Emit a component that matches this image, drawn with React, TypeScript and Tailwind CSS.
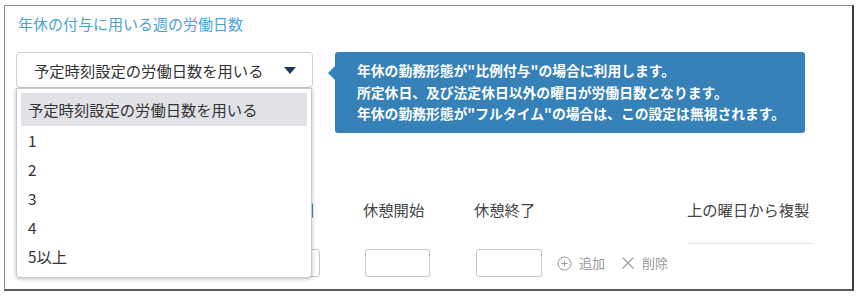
import React from "react";

const items = ["予定時刻設定の労働日数を用いる", "1", "2", "3", "4", "5以上"];

export default function App() {
  return (
    <div className="w-[860px] h-[296px] bg-white pt-[5px] pl-[4px] font-['Noto_Sans_CJK_JP','Noto_Sans',sans-serif]">
      <div className="relative w-[850px] h-[286px] border border-[#8c8c8c] border-r-2 border-r-[#3a3a3a] border-b-2 border-b-[#5a5a5a] bg-white overflow-hidden">
        {/* title */}
        <div className="pt-[8px] pl-[13px] text-[15px] leading-[20px] text-[#4ba3d9]">年休の付与に用いる週の労働日数</div>

        {/* select + help */}
        <div className="flex items-start mt-[18px] pl-[11px]">
          <div className="relative z-10 w-[297px]">
            <div className="h-[36px] flex items-center justify-between border border-[#c9ced8] rounded-[4px] pl-[17px] pr-[16px] text-[15.3px] text-[#333]">
              <span>予定時刻設定の労働日数を用いる</span>
              <span className="w-0 h-0 border-x-[6px] border-x-transparent border-t-[7px] border-t-[#1f3a5a]" />
            </div>
            {/* dropdown */}
            <div className="absolute left-0 top-[36px] w-[296px] bg-white border border-[#c8c8c8] rounded-b-[4px] shadow-[0_1px_4px_rgba(0,0,0,0.25)] px-[4px] pt-[4px] pb-[6px]">
              {items.map((it, i) => (
                <div
                  key={it}
                  className={
                    i === 0
                      ? "h-[33px] flex items-center pl-[7px] text-[15.3px] text-[#333] bg-[#e1e1e8]"
                      : "h-[29px] flex items-center pl-[7px] text-[15.3px] text-[#333]"
                  }
                >
                  {it}
                </div>
              ))}
            </div>
          </div>

          <div className="relative ml-[22px] w-[470px] h-[81px] bg-[#3681b8] rounded-[3px] pl-[22px] pt-[8px] text-[13.8px] leading-[21.5px] font-bold text-white">
            <span className="absolute left-[-7px] top-[14px] w-0 h-0 border-y-[7px] border-y-transparent border-r-[7px] border-r-[#3681b8]" />
            <p>年休の勤務形態が"比例付与"の場合に利用します。</p>
            <p>所定休日、及び法定休日以外の曜日が労働日数となります。</p>
            <p>年休の勤務形態が"フルタイム"の場合は、この設定は無視されます。</p>
          </div>
        </div>

        {/* table behind */}
        <div className="flex items-start mt-[66px] text-[15.3px] leading-[20px] text-[#444]">
          <div className="w-[356px] text-right pr-[47px] text-[#2f5f8f]">終業時刻</div>
          <div className="w-[111px] pl-[2px]">休憩開始</div>
          <div className="w-[215px] pl-[2px]">休憩終了</div>
          <div className="w-[127px] pb-[24px] border-b border-[#e6e6e6] whitespace-nowrap">上の曜日から複製</div>
        </div>

        <div className="flex items-center mt-[5px]">
          <div className="ml-[250px] w-[65px] h-[28px] border border-[#c8c8c8] rounded-[3px]" />
          <div className="ml-[45px] w-[65px] h-[28px] border border-[#c8c8c8] rounded-[3px]" />
          <div className="ml-[46px] w-[66px] h-[28px] border border-[#c8c8c8] rounded-[3px]" />
          <div className="ml-[15px] flex items-center gap-[7px] text-[13px] text-[#9a9a9a]">
            <svg width="15" height="15" viewBox="0 0 15 15" fill="none" stroke="#9a9a9a" strokeWidth="1">
              <circle cx="7.5" cy="7.5" r="6.5" />
              <path d="M7.5 4.5v6M4.5 7.5h6" />
            </svg>
            <span>追加</span>
          </div>
          <div className="ml-[16px] flex items-center gap-[7px] text-[13px] text-[#9a9a9a]">
            <svg width="14" height="14" viewBox="0 0 14 14" fill="none" stroke="#9a9a9a" strokeWidth="1.1">
              <path d="M1.5 1.5l11 11M12.5 1.5l-11 11" />
            </svg>
            <span>削除</span>
          </div>
        </div>
      </div>
    </div>
  );
}
